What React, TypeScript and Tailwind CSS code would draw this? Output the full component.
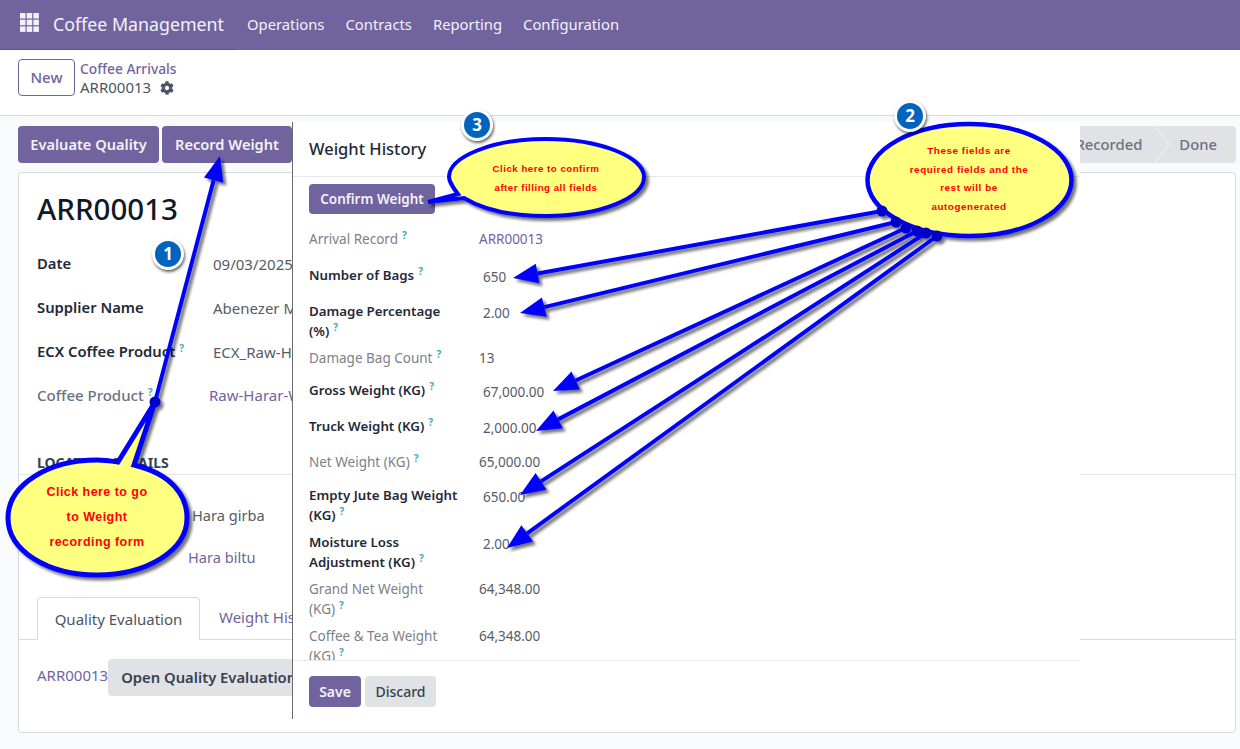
import React from "react";
import { FaCog } from "react-icons/fa";

type Field = {
    label: string[];
    value: string;
    bold?: boolean;
    link?: boolean;
    rowClass: string;
};

const fields: Field[] = [
    { label: ["Arrival Record"], value: "ARR00013", link: true, rowClass: "h-[36px]" },
    { label: ["Number of Bags"], value: "650", bold: true, rowClass: "h-[36px]" },
    { label: ["Damage Percentage", "(%)"], value: "2.00", bold: true, rowClass: "h-[47px]" },
    { label: ["Damage Bag Count"], value: "13", rowClass: "h-[32px]" },
    { label: ["Gross Weight (KG)"], value: "67,000.00", bold: true, rowClass: "h-[36px]" },
    { label: ["Truck Weight (KG)"], value: "2,000.00", bold: true, rowClass: "h-[36px]" },
    { label: ["Net Weight (KG)"], value: "65,000.00", rowClass: "h-[33px]" },
    { label: ["Empty Jute Bag Weight", "(KG)"], value: "650.00", bold: true, rowClass: "h-[47px]" },
    { label: ["Moisture Loss", "Adjustment (KG)"], value: "2.00", bold: true, rowClass: "h-[47px]" },
    { label: ["Grand Net Weight", "(KG)"], value: "64,348.00", rowClass: "h-[47px]" },
    { label: ["Coffee & Tea Weight", "(KG)"], value: "64,348.00", rowClass: "h-[47px]" },
];

const Help = () => (
    <sup className="ml-1 text-[10px] font-bold text-[#3fa9c4]">?</sup>
);

function FormRow({ label, value, top, link, help }: { label: string; value: string; top: string; link?: boolean; help?: boolean }) {
    return (
        <div className={`flex items-center ${top}`}>
            <div className="w-[176px] shrink-0 text-[14.8px] font-semibold text-[#1f2937]">
                {label}
                {help && <Help />}
            </div>
            <div className={`mt-[2px] whitespace-nowrap text-[15px] ${link ? "text-[#71639e]" : "text-[#555c66]"}`}>{value}</div>
        </div>
    );
}

function Arrow({ x1, y1, x2, y2 }: { x1: number; y1: number; x2: number; y2: number }) {
    const len = Math.hypot(x2 - x1, y2 - y1);
    const ux = (x2 - x1) / len;
    const uy = (y2 - y1) / len;
    const bx = x2 - ux * 25;
    const by = y2 - uy * 25;
    const head = `${x2},${y2} ${bx - uy * 10},${by + ux * 10} ${bx + uy * 10},${by - ux * 10}`;
    return (
        <g>
            <line x1={x1} y1={y1} x2={bx} y2={by} stroke="#0000ff" strokeWidth="4" />
            <polygon points={head} fill="#0000ff" />
            <circle cx={x1} cy={y1} r="5.5" fill="#0000c8" />
        </g>
    );
}

function Annotations() {
    return (
        <svg className="absolute left-0 top-0 h-[749px] w-[1240px]" viewBox="0 0 1240 749">
            <defs>
                <filter id="shadow" x="-20%" y="-20%" width="140%" height="140%">
                    <feDropShadow dx="3" dy="3" stdDeviation="1.8" floodColor="#000" floodOpacity="0.55" />
                </filter>
            </defs>
            <g filter="url(#shadow)">
                {/* bubble 1 with its tail and arrow */}
                <path
                    d="M118 462 L155 402 L134 465 C172 474 187 496 187 518 C187 551 146 575 97 575 C48 575 8 551 8 518 C8 485 48 460 97 460 C104 460 111 461 118 462 Z"
                    fill="#ffff80"
                    stroke="#0000ff"
                    strokeWidth="5"
                    strokeLinejoin="miter"
                />
                <Arrow x1={155} y1={402} x2={220} y2={156} />

                {/* bubble 3 */}
                <path
                    d="M458 194 C450 184 449 178 449 177 C449 157 492 139 546 139 C600 139 644 157 644 177 C644 198 600 216 546 216 C510 216 482 209 464 198 L428 202 Z"
                    fill="#ffff80"
                    stroke="#0000ff"
                    strokeWidth="4"
                />

                {/* bubble 2 */}
                <ellipse cx="969.5" cy="180" rx="102" ry="56" fill="#ffff80" stroke="#0000ff" strokeWidth="4.5" />
                <Arrow x1={882} y1={211} x2={513} y2={278} />
                <Arrow x1={896} y1={222} x2={520} y2={313} />
                <Arrow x1={906} y1={228} x2={553} y2={391} />
                <Arrow x1={917} y1={231} x2={536} y2={431} />
                <Arrow x1={926} y1={233} x2={520} y2={495} />
                <Arrow x1={937} y1={236} x2={507} y2={548} />
            </g>
        </svg>
    );
}

function NumberBadge({ n, className }: { n: number; className: string }) {
    return (
        <div
            className={`absolute flex h-[32px] w-[32px] items-center justify-center rounded-full border-[3px] border-white bg-[#0063be] text-[17px] font-bold text-white shadow-[1px_2px_3px_rgba(0,0,0,0.6)] ${className}`}
        >
            {n}
        </div>
    );
}

function BubbleText({ lines, className }: { lines: string[]; className: string }) {
    return (
        <div className={`absolute text-center font-bold text-[#ff0000] [font-family:'Liberation_Sans',Arial,sans-serif] ${className}`}>
            {lines.map((line) => (
                <div key={line} className="whitespace-nowrap">{line}</div>
            ))}
        </div>
    );
}

export default function App() {
    return (
        <div className="relative h-[749px] w-[1240px] overflow-hidden bg-[#f9fafb] [font-family:'Noto_Sans',sans-serif]">
            {/* Navbar */}
            <nav className="flex h-[50px] items-start bg-[#71639e] text-[#f3f1f8]">
                <div className="flex h-[50px] w-[235px] items-center border-b border-[#5c4f86] pl-5">
                    <svg className="-mt-1" width="19" height="19" viewBox="0 0 19 19" fill="#f3f1f8">
                        <rect x="0" y="0" width="5.5" height="5.5" />
                        <rect x="6.7" y="0" width="5.5" height="5.5" />
                        <rect x="13.4" y="0" width="5.5" height="5.5" />
                        <rect x="0" y="6.7" width="5.5" height="5.5" />
                        <rect x="6.7" y="6.7" width="5.5" height="5.5" />
                        <rect x="13.4" y="6.7" width="5.5" height="5.5" />
                        <rect x="0" y="13.4" width="5.5" height="5.5" />
                        <rect x="6.7" y="13.4" width="5.5" height="5.5" />
                        <rect x="13.4" y="13.4" width="5.5" height="5.5" />
                    </svg>
                    <span className="ml-[14px] text-[17.8px]">Coffee Management</span>
                </div>
                <div className="ml-3 flex h-[49px] items-center gap-[21px] text-[14.8px]">
                    <span>Operations</span>
                    <span>Contracts</span>
                    <span>Reporting</span>
                    <span>Configuration</span>
                </div>
            </nav>

            {/* Control panel */}
            <div className="flex h-[66px] items-start gap-[5px] border-b border-[#d8dadd] bg-white pl-[18px] pt-[9px]">
                <button className="h-[37px] w-[57px] rounded border border-[#71639e] text-[15px] font-medium text-[#71639e]">New</button>
                <div className="leading-[19px]">
                    <div className="text-[13.8px] font-medium text-[#71639e]">Coffee Arrivals</div>
                    <div className="flex items-center gap-[9px] text-[15px] text-[#4b5563]">
                        ARR00013
                        <FaCog className="text-[14px] text-[#4b5563]" />
                    </div>
                </div>
            </div>

            {/* Action bar */}
            <div className="flex items-center justify-between pl-[18px] pr-1 pt-[10px]">
                <div className="flex gap-[3px]">
                    <button className="h-[37px] w-[141px] rounded bg-[#71639e] text-[14.6px] font-semibold text-[#f3f1f8]">Evaluate Quality</button>
                    <button className="h-[37px] w-[130px] rounded bg-[#71639e] text-[14.6px] font-semibold text-[#f3f1f8]">Record Weight</button>
                </div>
                <div className="relative flex h-[37px] items-center overflow-hidden rounded bg-[#e0e2e6] text-[14.8px] font-medium text-[#6b7280]">
                    <span className="whitespace-nowrap pr-[37px]">Weight Recorded</span>
                    <svg className="absolute right-[65px] top-0" width="16" height="37" viewBox="0 0 16 37" fill="none" stroke="#f3f4f6" strokeWidth="1">
                        <path d="M0 0 L14 18.5 L0 37" />
                    </svg>
                    <span className="pr-[19px]">Done</span>
                </div>
            </div>

            {/* Form sheet */}
            <div className="mx-[18px] mt-[9px] mr-1 h-[561px] rounded border border-[#d8dadd] bg-white pt-[16px]">
                <h1 className="pl-[18px] text-[29.5px] font-medium leading-[40px] text-[#111827]">ARR00013</h1>
                <div className="pl-[18px]">
                    <FormRow label="Date" value="09/03/2025" top="mt-[24px] h-[20px]" />
                    <FormRow label="Supplier Name" value="Abenezer Mohammed" top="mt-[24px] h-[20px]" />
                    <FormRow label="ECX Coffee Product" value="ECX_Raw-Harar" top="mt-[24px] h-[20px]" help />
                    <div className="mt-[24px] flex h-[20px] items-center">
                        <div className="w-[172px] shrink-0 text-[15px] font-medium text-[#6b7280]">Coffee Product<Help /></div>
                        <div className="whitespace-nowrap text-[15px] text-[#71639e]">Raw-Harar-Washed</div>
                    </div>
                </div>
                <div className="mt-[49px] border-b border-[#e5e7eb] pb-[2px] pl-[18px] text-[14px] font-bold leading-[18px] text-[#374151]">LOCATION DETAILS</div>
                <div className="mt-[30px] pl-[173px] text-[14.6px] leading-[20px] text-[#555c66]">Hara girba</div>
                <div className="mt-[22px] pl-[169px] text-[14.6px] leading-[20px] text-[#71639e]">Hara biltu</div>

                {/* Tabs */}
                <div className="mt-[30px] flex h-[43px] items-end border-b border-[#d8dadd] pl-[18px] text-[15px]">
                    <div className="-mb-px flex h-[43px] w-[163px] items-center justify-center rounded-t border border-b-0 border-[#d8dadd] bg-white text-[#4b5563]">Quality Evaluation</div>
                    <div className="ml-[19px] flex h-[43px] items-center whitespace-nowrap text-[#71639e]">Weight History</div>
                </div>
                <div className="mt-[19px] flex items-start pl-[18px]">
                    <span className="mt-[5px] text-[15px] text-[#71639e]">ARR00013</span>
                    <button className="h-[37px] whitespace-nowrap rounded bg-[#e0e2e6] px-[13px] text-[14.8px] font-semibold text-[#374151]">Open Quality Evaluation</button>
                </div>
            </div>

            {/* Weight History dialog */}
            <div className="absolute left-[292px] top-[122px] flex h-[597px] w-[788px] flex-col border-l border-[#6b6b6b] bg-white">
                <div className="flex h-[55px] shrink-0 items-center border-b border-[#e5e7eb] pl-4 text-[16.5px] font-medium text-[#1f2937]">Weight History</div>
                <div className="flex-1 overflow-hidden pl-4 pt-[7px]">
                    <button className="h-[30px] w-[126px] rounded bg-[#71639e] text-[13.5px] font-semibold text-[#f3f1f8]">Confirm Weight</button>
                    <div className="mt-[16px]">
                        {fields.map((field) => (
                            <div key={field.label[0]} className={`flex text-[13.5px] leading-[19.5px] ${field.rowClass}`}>
                                <div className={`w-[170px] shrink-0 ${field.bold ? "text-[13.3px] font-semibold text-[#1f2937]" : "text-[#7c8188]"}`}>
                                    {field.label.map((line, i) => (
                                        <div key={line}>
                                            {line}
                                            {i === field.label.length - 1 && <Help />}
                                        </div>
                                    ))}
                                </div>
                                <div className={`${field.bold ? "pl-1 pt-0.5" : ""} ${field.link ? "text-[#71639e]" : "text-[#555c66]"}`}>{field.value}</div>
                            </div>
                        ))}
                    </div>
                </div>
                <div className="flex h-[59px] shrink-0 items-start gap-1 border-t border-[#e5e7eb] pl-4 pt-[15px]">
                    <button className="h-[31px] w-[52px] rounded bg-[#71639e] text-[14px] font-semibold text-[#f3f1f8]">Save</button>
                    <button className="h-[31px] w-[71px] rounded bg-[#e0e2e6] text-[14px] font-medium text-[#374151]">Discard</button>
                </div>
            </div>

            <Annotations />

            <NumberBadge n={1} className="left-[152px] top-[238px]" />
            <NumberBadge n={2} className="left-[894px] top-[100px]" />
            <NumberBadge n={3} className="left-[461px] top-[109px]" />

            <BubbleText
                lines={["Click here to go", "to Weight", "recording form"]}
                className="left-[17px] top-[480px] w-[160px] text-[12.5px] leading-[25px] tracking-[0.45px]"
            />
            <BubbleText
                lines={["Click here to confirm", "after filling all fields"]}
                className="left-[466px] top-[159px] w-[160px] text-[9.7px] leading-[19px] tracking-[0.5px]"
            />
            <BubbleText
                lines={["These fields are", "required fields and the", "rest will be", "autogenerated"]}
                className="left-[889px] top-[142px] w-[160px] text-[9.9px] leading-[18.7px] tracking-[0.55px]"
            />
        </div>
    );
}
